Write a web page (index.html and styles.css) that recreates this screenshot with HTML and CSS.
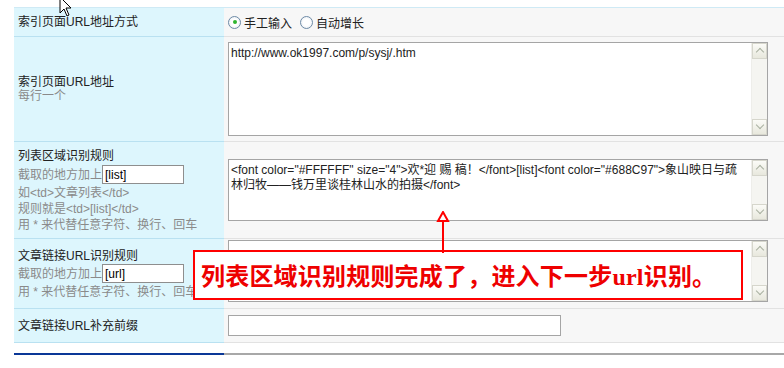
FILE: index.html
```html
<!DOCTYPE html>
<html lang="zh-CN">
<head>
<meta charset="utf-8">
<title>采集规则</title>
<link rel="stylesheet" href="styles.css">
</head>
<body>
<div class="form">
  <div class="row r1">
    <div class="lab"><div>索引页面URL地址方式</div></div>
    <div class="val">
      <label class="radio"><span class="dot on"></span>手工输入</label>
      <label class="radio"><span class="dot"></span>自动增长</label>
    </div>
  </div>
  <div class="row r2">
    <div class="lab"><div>索引页面URL地址<br><span class="help">每行一个</span></div></div>
    <div class="val">
      <div class="ta big"><textarea class="tx">http://www.ok1997.com/p/sysj/.htm</textarea><div class="sb"><span class="btn up"></span><span class="track"></span><span class="btn dn"></span></div></div>
    </div>
  </div>
  <div class="row r3">
    <div class="lab"><div>
      <div class="title">列表区域识别规则</div>
      <div class="help line">截取的地方加上<input class="tag" value="[list]"></div>
      <div class="help">如&lt;td&gt;文章列表&lt;/td&gt;</div>
      <div class="help">规则就是&lt;td&gt;[list]&lt;/td&gt;</div>
      <div class="help">用 * 来代替任意字符、换行、回车</div>
    </div></div>
    <div class="val">
      <div class="ta mid"><textarea class="tx">&lt;font color="#FFFFFF" size="4"&gt;欢*迎 赐 稿！&lt;/font&gt;[list]&lt;font color="#688C97"&gt;象山映日与疏林归牧——钱万里谈桂林山水的拍摄&lt;/font&gt;</textarea><div class="sb"><span class="btn up"></span><span class="track"></span><span class="btn dn"></span></div></div>
    </div>
  </div>
  <div class="row r4">
    <div class="lab"><div>
      <div class="title">文章链接URL识别规则</div>
      <div class="help line">截取的地方加上<input class="tag" value="[url]"></div>
      <div class="help">用 * 来代替任意字符、换行、回车</div>
    </div></div>
    <div class="val top">
      <div class="ta mid"><textarea class="tx"></textarea><div class="sb"><span class="btn up"></span><span class="track"></span><span class="btn dn"></span></div></div>
    </div>
  </div>
  <div class="row r5">
    <div class="lab"><div>文章链接URL补充前缀</div></div>
    <div class="val"><input class="prefix" value=""></div>
  </div>
</div>
<div class="foot"><div class="fl"></div><div class="fr"></div></div>

<div class="note">列表区域识别规则完成了，进入下一步<span class="lat">url</span>识别。</div>
<svg class="arrow" width="14" height="42" viewBox="0 0 14 42"><path d="M7 1 L2 10 L12 10 Z" fill="#fff" stroke="#ff0000" stroke-width="2"/><path d="M7 10 V42" stroke="#ff0000" stroke-width="2"/></svg>
<svg class="cursor" width="14" height="22" viewBox="0 0 14 22"><path d="M1 1 V17 L5 13 L8 20 L10 19 L7 12 L12 12 Z" fill="#fff" stroke="#000" stroke-width="1" stroke-linejoin="round"/></svg>
</body>
</html>
```
FILE: styles.css
```css
* { box-sizing: border-box; }
body {
  margin: 0;
  background: #fff;
  font-family: "Liberation Sans", "Noto Sans CJK SC", sans-serif;
  font-size: 12px;
  color: #222;
  position: relative;
  width: 784px;
  height: 368px;
  overflow: hidden;
}
.form {
  margin: 7px 0 0 14px;
  border-top: 1px solid #cfeaf5;
}
.row {
  display: grid;
  grid-template-columns: 210px 560px;
}
.lab {
  background: #ddf6fd;
  border-bottom: 1px solid #b9e1f1;
  padding-left: 4px;
  display: flex;
  align-items: center;
  line-height: 14px;
}
.val {
  background: #f7f7f7;
  border-bottom: 1px solid #e2e2e2;
  padding-left: 4px;
  display: flex;
  align-items: center;
}
.val.top { align-items: flex-start; padding-top: 1px; }
.r1 { height: 29px; }
.r2 { height: 105px; }
.r3 { height: 97px; }
.r4 { height: 70px; }
.r5 { height: 34px; }
.help { color: #8a8a8a; }
.r3 .lab, .r4 .lab { line-height: 16px; }
.r3 .title { margin-bottom: 1px; }
.title { color: #222; }
.line { display: flex; align-items: center; height: 20px; }
.tag {
  width: 82px;
  height: 19px;
  border: 1px solid #8e8e8e;
  background: #fff;
  font: 12px "Liberation Sans", sans-serif;
  color: #000;
  padding: 0 2px;
  margin: 0;
}
.radio { display: inline-flex; align-items: center; margin-right: 8px; color: #222; }
.dot {
  width: 13px; height: 13px;
  border-radius: 50%;
  border: 1px solid #6d8aa6;
  background: radial-gradient(circle, #fff 40%, #e3e9ef 100%);
  margin: 0 3px 0 0;
  position: relative;
}
.dot.on::after {
  content: "";
  position: absolute;
  left: 3.5px; top: 3.5px;
  width: 4px; height: 4px;
  border-radius: 50%;
  background: #2fb52f;
}
.ta {
  width: 540px;
  display: flex;
  border: 1px solid #a5a5a5;
  background: #fff;
}
.ta.big { height: 94px; }
.ta.mid { height: 62px; }
.tx {
  flex: 1;
  border: 0;
  resize: none;
  outline: none;
  font: 12px/15px "Liberation Sans", "Noto Sans CJK SC", sans-serif;
  color: #222;
  padding: 3px 2px;
  margin: 0;
  overflow: hidden;
  background: #fff;
}
.sb {
  width: 16px;
  display: flex;
  flex-direction: column;
  background: #f5f5f1;
  border-left: 1px solid #eeeeea;
}
.btn {
  height: 16px;
  border: 1px solid #d6d6cc;
  background: linear-gradient(#fbfbf7, #e8e8dd);
  position: relative;
}
.btn::after {
  content: "";
  position: absolute;
  left: 4px; width: 5px; height: 5px;
  border-left: 1.5px solid #a9b0a0;
  border-top: 1.5px solid #a9b0a0;
}
.btn.up::after { top: 5px; transform: rotate(45deg); }
.btn.dn::after { top: 2px; transform: rotate(225deg); }
.track { flex: 1; }
.prefix {
  width: 333px;
  height: 21px;
  border: 1px solid #a5a5a5;
  background: #fff;
  margin: 0;
}
.foot {
  display: grid;
  grid-template-columns: 210px 560px;
  margin: 10px 0 0 14px;
  height: 2px;
}
.fl { background: #0a3797; }
.fr { background: #a8a8a8; }
.note {
  position: absolute;
  left: 193px; top: 250px;
  width: 550px; height: 50px;
  border: 2px solid #ff0000;
  background: #fff;
  color: #ee0000;
  font: bold 24px/46px "Noto Sans CJK SC", sans-serif;
  letter-spacing: 0.2px;
  padding-left: 6px;
  white-space: nowrap;
}
.lat { font-family: "Liberation Serif", serif; font-weight: bold; }
.arrow { position: absolute; left: 436px; top: 211px; }
.cursor { position: absolute; left: 59px; top: -4px; }
```
